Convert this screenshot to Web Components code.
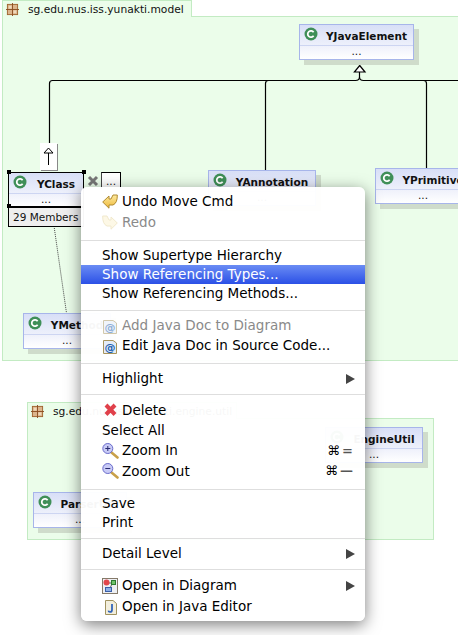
<!DOCTYPE html>
<html>
<head>
<meta charset="utf-8">
<title>Class diagram</title>
<style>
html, body { margin: 0; background: #fff; }
body { font-family: "DejaVu Sans", sans-serif; }
</style>
</head>
<body>
<diagram-canvas>
  <package-frame style="--x:2px;--y:0;--w:470px;--h:361px;--tab:190px;--tabh:17px" title-text="sg.edu.nus.iss.yunakti.model"></package-frame>
  <package-frame style="--x:27px;--y:402px;--w:407px;--h:138px;--tab:210px;--tabh:17px" title-text="sg.edu.nus.iss.yunakti.engine.util"></package-frame>
  <diagram-edges></diagram-edges>
  <uml-node name="YJavaElement" style="--x:299px;--y:24px;--w:115px"></uml-node>
  <uml-node name="YAnnotation" style="--x:208px;--y:170px;--w:108px"></uml-node>
  <uml-node name="YPrimitive" style="--x:375px;--y:168px;--w:96px"></uml-node>
  <uml-node name="YClass" selected style="--x:8px;--y:172px;--w:76px"></uml-node>
  <uml-node name="YMethod" style="--x:23px;--y:313px;--w:88px"></uml-node>
  <uml-node name="EngineUtil" style="--x:325px;--y:427px;--w:98px"></uml-node>
  <uml-node name="ParserUtil" style="--x:33px;--y:492px;--w:94px"></uml-node>
  <node-tools></node-tools>
  <context-menu>
    <menu-item icon="undo" style="--h:21px">Undo Move Cmd</menu-item>
    <menu-item icon="redo" disabled style="--h:21px">Redo</menu-item>
    <menu-sep></menu-sep>
    <menu-item>Show Supertype Hierarchy</menu-item>
    <menu-item active>Show Referencing Types...</menu-item>
    <menu-item>Show Referencing Methods...</menu-item>
    <menu-sep></menu-sep>
    <menu-item icon="doc" disabled style="--h:20px">Add Java Doc to Diagram</menu-item>
    <menu-item icon="doc" style="--h:20px">Edit Java Doc in Source Code...</menu-item>
    <menu-sep></menu-sep>
    <menu-item arrow>Highlight</menu-item>
    <menu-sep style="--top:6px"></menu-sep>
    <menu-item icon="delete" style="--h:20px;--lift:0">Delete</menu-item>
    <menu-item style="--h:20px;--lift:0">Select All</menu-item>
    <menu-item icon="zoomin" style="--h:20px;--lift:0" keys="="><span>Zoom In</span></menu-item>
    <menu-item icon="zoomout" style="--h:21px;--lift:0" keys="—"><span>Zoom Out</span></menu-item>
    <menu-sep style="--top:8px;--bottom:4px"></menu-sep>
    <menu-item>Save</menu-item>
    <menu-item>Print</menu-item>
    <menu-sep style="--top:6px"></menu-sep>
    <menu-item arrow>Detail Level</menu-item>
    <menu-sep style="--top:6px"></menu-sep>
    <menu-item icon="diagram" arrow style="--h:21px">Open in Diagram</menu-item>
    <menu-item icon="java" style="--h:21px">Open in Java Editor</menu-item>
  </context-menu>
</diagram-canvas>

<script>
const ARROW_PATH = 'M.7 8 L7 2 V5 H9 L11 1 H15.3 Q15.5 9 11 11 H7 V14.2 Z';
const ICONS = {
  undo: `<svg width="16" height="15" viewBox="0 0 16 15"><defs><linearGradient id="u" x1="0" y1="0" x2="0" y2="1"><stop offset="0" stop-color="#fdeaa0"/><stop offset="1" stop-color="#efb93a"/></linearGradient></defs><path d="${ARROW_PATH}" fill="url(#u)" stroke="#b08a30" stroke-linejoin="round"/></svg>`,
  redo: `<svg width="16" height="15" viewBox="0 0 16 15"><path transform="matrix(-1 0 0 1 16 0)" d="${ARROW_PATH}" fill="#fdf3cf" stroke="#e4d49c" stroke-linejoin="round"/></svg>`,
  doc: `<svg width="16" height="16" viewBox="0 0 16 16"><path d="M1.5 2.5 H11 L14.5 5 V15.5 H1.5 Z" fill="#e4ecf8" stroke="#a8945c"/><text x="8" y="12.5" text-anchor="middle" font-family="DejaVu Sans" font-size="11" font-weight="bold" fill="#1d5fb0">@</text></svg>`,
  delete: `<svg width="16" height="16" viewBox="0 0 16 16"><path d="M4 3 L13 12.5 M13 3 L4 12.5" stroke="#e0404a" stroke-width="4"/></svg>`,
  zoomin: `<svg width="18" height="17" viewBox="0 0 18 17"><path d="M9.5 10.5 L15.5 15.5" stroke="#c8a04a" stroke-width="2.6" stroke-linecap="round"/><circle cx="5.8" cy="6.5" r="5" fill="#c9cbf6" stroke="#6a6ccc"/><path d="M3.3 6.5 H8.3 M5.8 4 V9" stroke="#26286e"/></svg>`,
  zoomout: `<svg width="18" height="17" viewBox="0 0 18 17"><path d="M9.5 10.5 L15.5 15.5" stroke="#c8a04a" stroke-width="2.6" stroke-linecap="round"/><circle cx="5.8" cy="6.5" r="5" fill="#c9cbf6" stroke="#6a6ccc"/><path d="M3.3 6.5 H8.3" stroke="#26286e"/></svg>`,
  diagram: `<svg width="16" height="16" viewBox="0 0 16 16"><rect x=".5" y=".5" width="15" height="15" fill="#eef0f4" stroke="#857a6a"/><path d="M5 5 H11 M10 6 L8 10" stroke="#666"/><circle cx="4.5" cy="4.5" r="3" fill="#e2474c"/><rect x="9.5" y="2.5" width="4" height="4" fill="#6fc46a" stroke="#2e7a30"/><rect x="3.5" y="9.5" width="6" height="4" fill="#8fb0e6" stroke="#3a5fa8"/></svg>`,
  java: `<svg width="16" height="16" viewBox="0 0 16 16"><path d="M3.5 1.5 H11 L14.5 4.5 V15.5 H3.5 Z" fill="#f2eedc" stroke="#a0925f"/><path d="M10 5 V11 Q10 13 8 13 Q6.6 13 6.4 11.6" fill="none" stroke="#2a5fb8" stroke-width="1.7"/></svg>`
};

class DiagramCanvas extends HTMLElement {
  constructor() {
    super();
    this.attachShadow({mode: 'open'}).innerHTML = `
      <style>
        :host { display: block; position: relative; width: 458px; height: 635px; overflow: hidden; background: #fff; }
      </style>
      <slot></slot>`;
  }
}

class PackageFrame extends HTMLElement {
  constructor() {
    super();
    this.attachShadow({mode: 'open'}).innerHTML = `
      <style>
        :host { display: flex; flex-direction: column; position: absolute; left: var(--x); top: var(--y); width: var(--w); height: var(--h);
          font: 10.7px "DejaVu Sans", sans-serif; color: #111; }
        .tab { display: flex; align-items: center; gap: 9px; box-sizing: border-box; width: var(--tab); height: var(--tabh); margin-bottom: -1px;
          padding-left: 3px; background: #ebfdea; border: 1px solid #c3ebc3; border-bottom: 0; position: relative; white-space: nowrap; }
        .body { flex: 1; background: #ebfdea; border: 1px solid #c3ebc3; }
      </style>
      <div class="tab">
        <svg width="13" height="13" viewBox="0 0 14 14"><rect x="1.5" y="1.5" width="11" height="11" fill="#dcb48c" stroke="#a0622e"/><path d="M7 0 V14 M0 7 H14" stroke="#8a4c20"/><rect x="3" y="3" width="3" height="3" fill="#f0d8bc"/><rect x="8" y="8" width="3" height="3" fill="#f0d8bc"/></svg>
        <span>${this.getAttribute('title-text')}</span>
      </div>
      <div class="body"></div>`;
  }
}

class DiagramEdges extends HTMLElement {
  constructor() {
    super();
    this.attachShadow({mode: 'open'}).innerHTML = `
      <style>
        :host { display: block; position: absolute; left: 0; top: 0; }
        svg { display: block; }
        path { fill: none; stroke: #000; stroke-width: 1.2; }
      </style>
      <svg width="458" height="635" viewBox="0 0 458 635">
        <path d="M49.5 143 V83.5 Q49.5 80.5 52.5 80.5 H355.5 Q359.5 80.5 359.5 77 V72"/>
        <path d="M458 80.5 H363.5 Q359.5 80.5 359.5 77"/>
        <path d="M265.5 170 V83.5 Q265.5 80.5 268.5 80.5"/>
        <path d="M426.5 168 V83.5 Q426.5 80.5 423.5 80.5"/>
        <path d="M359.7 65.5 L365 72 H354.4 Z" style="fill:#fff"/>
        <path d="M54 226 L66.5 313" style="stroke:#444;stroke-dasharray:1 1;stroke-width:1"/>
      </svg>`;
  }
}

class UmlNode extends HTMLElement {
  constructor() {
    super();
    this.attachShadow({mode: 'open'}).innerHTML = `
      <style>
        :host { display: block; position: absolute; left: var(--x); top: var(--y); width: var(--w);
          font: 10.5px "DejaVu Sans", sans-serif; color: #111; }
        .box { box-sizing: border-box; border: 1px solid #a7b5ea; box-shadow: 5px 5px 0 #cfdccb; background: #fff; }
        :host([selected]) .box { border-color: #000; box-shadow: none; }
        .head { display: flex; align-items: center; height: 20px; padding: 0 0 0 4px; background: linear-gradient(#d8dff7, #edf0fb); border-bottom: 1px solid #cdd5f2; }
        .name { flex: 1; text-align: center; font-weight: bold; white-space: nowrap; padding-top: 2px; }
        .more { height: 13px; line-height: 11px; text-align: center; background: linear-gradient(#eff1fb, #fff); }
        svg { flex: none; margin: -3px 2px 0 0; }
      </style>
      <div class="box">
        <div class="head">
          <svg width="14" height="14" viewBox="0 0 14 14"><circle cx="7" cy="7" r="6.5" fill="#3f8f58"/><path d="M9.6 5.2 A3.2 3.2 0 1 0 9.6 8.8" fill="none" stroke="#fff" stroke-width="1.8"/></svg>
          <span class="name">${this.getAttribute('name')}</span>
        </div>
        <div class="more">...</div>
      </div>`;
  }
}

// the bits that hang round the selected YClass node
class NodeTools extends HTMLElement {
  constructor() {
    super();
    this.attachShadow({mode: 'open'}).innerHTML = `
      <style>
        :host { display: block; position: absolute; left: 0; top: 0; font: 10.5px "DejaVu Sans", sans-serif; color: #111; }
        .up { position: absolute; left: 40px; top: 143px; width: 17px; height: 27px; display: flex; align-items: center; justify-content: center;
          background: #fff; box-shadow: 1px 1px 0 #888; }
        .members { position: absolute; left: 8px; top: 206px; box-sizing: border-box; width: 76px; height: 21px; line-height: 19px; padding-left: 4px;
          background: #eee; border: 1px solid #000; border-top-width: 2px; white-space: nowrap; }
        .close { position: absolute; left: 87px; top: 175px; }
        .dots { position: absolute; left: 101px; top: 172px; box-sizing: border-box; width: 20px; height: 17px; line-height: 17px; text-align: center;
          background: #fff; border: 1px solid #000; border-left-color: #444; border-bottom: 0; }
        .handle { position: absolute; width: 4px; height: 4px; background: #000; }
      </style>
      <div class="up"><svg width="11" height="19" viewBox="0 0 11 19"><path d="M5.5 18 V6 M5.5 1 L10 6 H1 Z" fill="#fff" stroke="#000"/></svg></div>
      <div class="members">29 Members</div>
      <svg class="close" width="12" height="12" viewBox="0 0 12 12"><path d="M2 2 L10 10 M10 2 L2 10" stroke="#777" stroke-width="3"/></svg>
      <div class="dots">...</div>
      <div class="handle" style="left:7px;top:170px"></div>
      <div class="handle" style="left:82px;top:170px"></div>
      <div class="handle" style="left:7px;top:204px"></div>`;
  }
}

class ContextMenu extends HTMLElement {
  constructor() {
    super();
    this.attachShadow({mode: 'open'}).innerHTML = `
      <style>
        :host { display: flex; flex-direction: column; position: absolute; left: 81px; top: 187px; width: 284px; box-sizing: border-box; padding: 4px 0;
          border-radius: 6px; background: rgba(255,255,255,.965); box-shadow: 0 4px 16px rgba(0,0,0,.5);
          font: 13.5px "DejaVu Sans", sans-serif; color: #000; }
      </style>
      <slot></slot>`;
  }
}

class MenuItem extends HTMLElement {
  constructor() {
    super();
    const icon = this.getAttribute('icon');
    const keys = this.getAttribute('keys');
    this.attachShadow({mode: 'open'}).innerHTML = `
      <style>
        :host { display: flex; align-items: center; height: var(--h, 19px); padding: 0 10px 0 21px; white-space: nowrap; }
        :host([disabled]) { color: #8a8a8a; }
        :host([disabled]) .ic { opacity: .5; }
        :host([active]) { color: #fff; background: linear-gradient(#6a8cf4, #2b50e6); }
        .ic { width: 20px; flex: none; display: flex; align-items: center; }
        .label { flex: 1; padding-bottom: var(--lift, 2px); }
        .keys { display: flex; align-items: center; gap: 2px; padding-right: 2px; font-size: 13px; }
        .keys b { font-weight: bold; color: #555; }
      </style>
      ${icon ? `<span class="ic">${ICONS[icon]}</span>` : ''}
      <span class="label"><slot></slot></span>
      ${keys ? `<span class="keys">⌘<b>${keys}</b></span>` : ''}
      ${this.hasAttribute('arrow') ? `<svg width="9" height="10" viewBox="0 0 9 10"><path d="M0 0 L9 5 L0 10 Z" fill="#444"/></svg>` : ''}`;
  }
}

class MenuSep extends HTMLElement {
  constructor() {
    super();
    this.attachShadow({mode: 'open'}).innerHTML = `
      <style>
        :host { display: block; height: 1px; margin: var(--top, 7px) 0 var(--bottom, 5px); background: #dedede; }
      </style>`;
  }
}

customElements.define('diagram-canvas', DiagramCanvas);
customElements.define('package-frame', PackageFrame);
customElements.define('diagram-edges', DiagramEdges);
customElements.define('uml-node', UmlNode);
customElements.define('node-tools', NodeTools);
customElements.define('context-menu', ContextMenu);
customElements.define('menu-item', MenuItem);
customElements.define('menu-sep', MenuSep);
</script>
</body>
</html>
